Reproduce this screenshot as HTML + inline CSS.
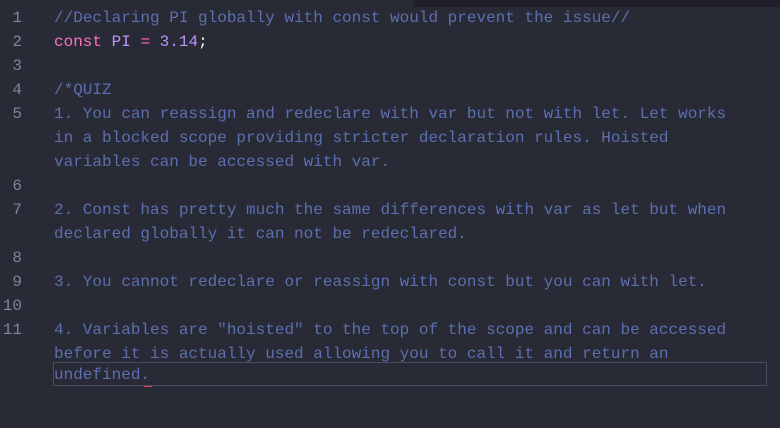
<!DOCTYPE html>
<html><head><style>
html,body{margin:0;padding:0;background:#282a36;width:780px;height:428px;overflow:hidden;}
body{font-family:"Liberation Mono",monospace;font-size:16px;}
.top{position:absolute;left:414px;top:0;width:366px;height:7px;background:#1e1f29;}
.row{position:absolute;left:0;height:24px;line-height:24px;white-space:pre;}
.n{position:absolute;left:0;width:22px;text-align:right;color:#7f8497;}
.t{position:absolute;left:54px;color:#5c6fae;}
.cur{position:absolute;left:53px;top:362px;width:714px;height:24px;border:1px solid #4a4c5c;box-sizing:border-box;}
.k{color:#ff6fbf}.p{color:#bd93f9}.w{color:#f8f8f2}
</style></head><body>
<div class="top"></div>
<div class="cur"></div>
<div class="row" style="top:6px"><span class="n">1</span><span class="t">//Declaring PI globally with const would prevent the issue//</span></div>
<div class="row" style="top:30px"><span class="n">2</span><span class="t"><span class="k">const</span> <span class="p">PI</span> <span class="k">=</span> <span class="p">3.14</span><span class="w">;</span></span></div>
<div class="row" style="top:54px"><span class="n">3</span></div>
<div class="row" style="top:78px"><span class="n">4</span><span class="t">/*QUIZ</span></div>
<div class="row" style="top:102px"><span class="n">5</span><span class="t">1. You can reassign and redeclare with var but not with let. Let works</span></div>
<div class="row" style="top:126px"><span class="t">in a blocked scope providing stricter declaration rules. Hoisted</span></div>
<div class="row" style="top:150px"><span class="t">variables can be accessed with var.</span></div>
<div class="row" style="top:174px"><span class="n">6</span></div>
<div class="row" style="top:198px"><span class="n">7</span><span class="t">2. Const has pretty much the same differences with var as let but when</span></div>
<div class="row" style="top:222px"><span class="t">declared globally it can not be redeclared.</span></div>
<div class="row" style="top:246px"><span class="n">8</span></div>
<div class="row" style="top:270px"><span class="n">9</span><span class="t">3. You cannot redeclare or reassign with const but you can with let.</span></div>
<div class="row" style="top:294px"><span class="n">10</span></div>
<div class="row" style="top:318px"><span class="n">11</span><span class="t">4. Variables are "hoisted" to the top of the scope and can be accessed</span></div>
<div class="row" style="top:342px"><span class="t">before it is actually used allowing you to call it and return an</span></div>
<div class="row" style="top:363px"><span class="t">undefined.</span></div>
<div style="position:absolute;left:144px;top:386px;width:8px;height:3px;border-top:1px solid #e0404a;"></div>
</body></html>
